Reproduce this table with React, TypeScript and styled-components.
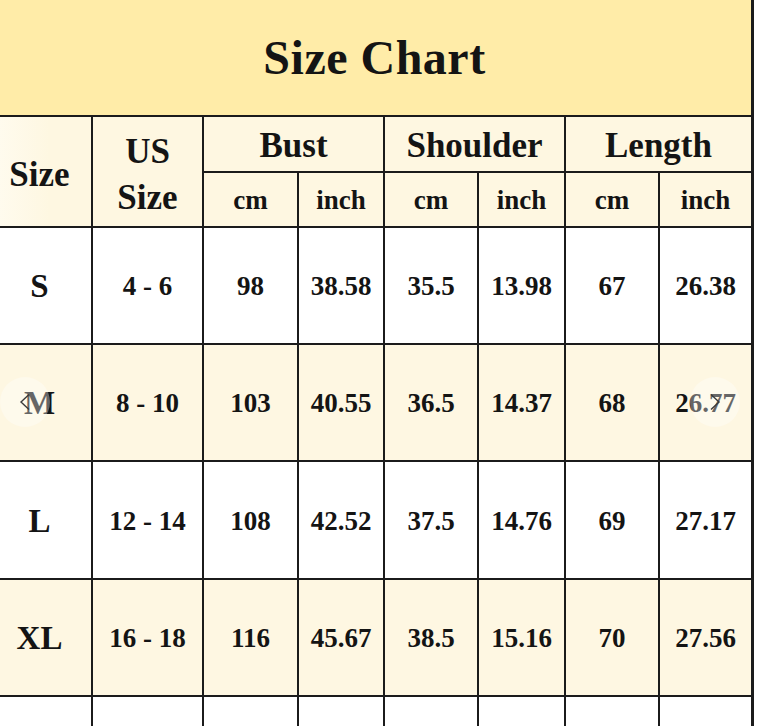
import React from 'react';
import styled, { createGlobalStyle } from 'styled-components';

const GlobalStyle = createGlobalStyle`
  html, body {
    margin: 0;
    padding: 0;
    background: #ffffff;
    overflow: hidden;
  }
  body {
    font-family: "Liberation Serif", "Times New Roman", serif;
    color: #141414;
  }
`;

const Page = styled.div`
  position: relative;
  width: 760px;
  height: 726px;
  overflow: hidden;
`;

const Chart = styled.div`
  display: grid;
  grid-template-columns: 103px 109px 93px 84px 92px 85px 92px 91px;
  grid-template-rows: 115px 54px 53px 115px 115px 116px 115px 115px;
  gap: 2px;
  width: max-content;
  margin-left: -12px;
  padding-right: 3px;
  background: #1b1b1b;
`;

const Title = styled.div`
  grid-column: 1 / -1;
  display: flex;
  align-items: center;
  justify-content: center;
  padding-left: 10px;
  background: #ffeca8;
  font-size: 48px;
  font-weight: 700;
  letter-spacing: 0.5px;
`;

const Head = styled.div<{ $rows?: number; $cols?: number; $small?: boolean; $left?: boolean }>`
  grid-row: span ${p => p.$rows || 1};
  grid-column: span ${p => p.$cols || 1};
  display: flex;
  flex-direction: column;
  align-items: center;
  justify-content: center;
  padding-top: ${p => (p.$rows === 2 ? '6px' : '3px')};
  background: ${p => (p.$left ? 'linear-gradient(90deg, #fffcf1 0%, #fef7e1 60%)' : '#fef7e1')};
  font-size: ${p => (p.$small ? '27px' : '35px')};
  font-weight: 700;
  line-height: 1.3;
`;

const Cell = styled.div<{ $shade?: boolean; $first?: boolean }>`
  display: flex;
  align-items: center;
  justify-content: center;
  padding-top: 2px;
  background: ${p => (p.$shade ? '#fef7e2' : '#ffffff')};
  font-size: ${p => (p.$first ? '33px' : '27px')};
  font-weight: 700;
  white-space: nowrap;
`;

const Nav = styled.div<{ $side: 'left' | 'right' }>`
  position: absolute;
  top: 377px;
  ${p => (p.$side === 'left' ? 'left: 0;' : 'left: 690px;')}
  width: 50px;
  height: 50px;
  border-radius: 50%;
  background: rgba(255, 255, 255, 0.35);
  display: flex;
  align-items: center;
  justify-content: center;
`;

const rows = [
  ['S', '4 - 6', '98', '38.58', '35.5', '13.98', '67', '26.38'],
  ['M', '8 - 10', '103', '40.55', '36.5', '14.37', '68', '26.77'],
  ['L', '12 - 14', '108', '42.52', '37.5', '14.76', '69', '27.17'],
  ['XL', '16 - 18', '116', '45.67', '38.5', '15.16', '70', '27.56'],
  ['', '', '', '', '', '', '', ''],
];

function Chevron({ dir }: { dir: 'left' | 'right' }) {
  return (
    <svg width="12" height="18" viewBox="0 0 12 18" fill="none">
      <path
        d={dir === 'left' ? 'M10 1.5 L2 9 L10 16.5' : 'M2 1.5 L10 9 L2 16.5'}
        stroke="#3a3a3a"
        strokeWidth="1.4"
      />
    </svg>
  );
}

export default function App() {
  return (
    <Page>
      <GlobalStyle />
      <Chart>
        <Title>Size Chart</Title>
        <Head $rows={2} $left>Size</Head>
        <Head $rows={2}>
          <span>US</span>
          <span>Size</span>
        </Head>
        <Head $cols={2}>Bust</Head>
        <Head $cols={2}>Shoulder</Head>
        <Head $cols={2}>Length</Head>
        <Head $small>cm</Head>
        <Head $small>inch</Head>
        <Head $small>cm</Head>
        <Head $small>inch</Head>
        <Head $small>cm</Head>
        <Head $small>inch</Head>
        {rows.map((r, i) =>
          r.map((v, j) => (
            <Cell key={`${i}-${j}`} $shade={i % 2 === 1} $first={j === 0}>
              {v}
            </Cell>
          ))
        )}
      </Chart>
      <Nav $side="left">
        <Chevron dir="left" />
      </Nav>
      <Nav $side="right">
        <Chevron dir="right" />
      </Nav>
    </Page>
  );
}
